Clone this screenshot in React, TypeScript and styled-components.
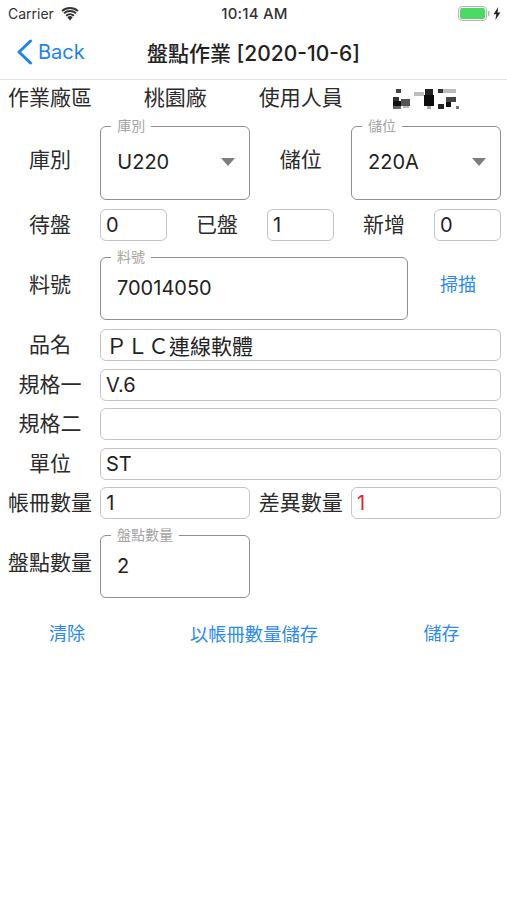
import React from 'react';
import styled, { createGlobalStyle } from 'styled-components';

const GlobalStyle = createGlobalStyle`
  html, body {
    margin: 0;
    padding: 0;
    background: #fff;
  }
  body {
    font-family: Inter, "Noto Sans CJK TC", sans-serif;
    color: #222;
  }
`;

const Page = styled.div`
  width: 507px;
  height: 900px;
  overflow: hidden;
  background: #fff;
`;

const StatusBar = styled.div`
  height: 27px;
  padding: 0 6px 0 8px;
  box-sizing: border-box;
  display: grid;
  grid-template-columns: 1fr auto 1fr;
  align-items: center;
  font-size: 14px;
  color: #333;
`;

const StatusLeft = styled.div`
  display: flex;
  align-items: center;
  gap: 7px;
`;

const StatusTime = styled.div`
  font-size: 15px;
  font-weight: 500;
  letter-spacing: 0.2px;
`;

const StatusRight = styled.div`
  display: flex;
  justify-content: flex-end;
  align-items: center;
  gap: 3px;
`;

const NavBar = styled.div`
  height: 53px;
  box-sizing: border-box;
  border-bottom: 1px solid #e4e4e4;
  display: grid;
  grid-template-columns: 1fr auto 1fr;
  align-items: center;
  padding: 0 16px 3px;
`;

const BackButton = styled.div`
  display: flex;
  align-items: center;
  gap: 5px;
  color: #1b84f2;
  font-size: 20px;
`;

const Title = styled.div`
  font-size: 21px;
  font-weight: 500;
  color: #222;
`;

const Form = styled.div`
  padding: 0 6px 0 8px;
  display: flex;
  flex-direction: column;
`;

const Row = styled.div<{ $height: number; $top: number; $spread?: boolean }>`
  display: flex;
  align-items: center;
  justify-content: ${(p) => (p.$spread ? 'space-between' : 'flex-start')};
  gap: 8px;
  height: ${(p) => p.$height}px;
  margin-top: ${(p) => p.$top}px;
`;

const Label = styled.div`
  flex: 0 0 84px;
  text-align: center;
  font-size: 21px;
  line-height: 28px;
  color: #2b2b2b;
  white-space: nowrap;
`;

const Plain = styled.div<{ $width: number }>`
  flex: 0 0 ${(p) => p.$width}px;
  display: flex;
  justify-content: center;
  align-items: center;
  font-size: 21px;
  line-height: 28px;
  color: #2b2b2b;
`;

const Input = styled.div<{ $width: number; $red?: boolean; $size?: number }>`
  flex: 0 0 ${(p) => p.$width}px;
  width: ${(p) => p.$width}px;
  height: 32px;
  box-sizing: border-box;
  border: 1px solid #c4c4c4;
  border-radius: 6px;
  padding: 0 5px;
  display: flex;
  align-items: center;
  font-size: ${(p) => p.$size ?? 20}px;
  color: ${(p) => (p.$red ? '#e0242c' : '#222')};
  white-space: nowrap;
`;

const Box = styled.fieldset<{ $width: number; $height: number }>`
  flex: 0 0 ${(p) => p.$width}px;
  width: ${(p) => p.$width}px;
  height: ${(p) => p.$height}px;
  box-sizing: border-box;
  margin: 0;
  padding: 0 16px;
  min-width: 0;
  border: 1.5px solid #8f8f8f;
  border-radius: 6px;
`;

const Legend = styled.legend`
  padding: 0 6px;
  margin-left: -6px;
  font-size: 14px;
  line-height: 14px;
  color: #a3a3a3;
`;

const BoxInner = styled.div<{ $top: number }>`
  display: flex;
  justify-content: space-between;
  align-items: center;
  font-size: 20px;
  line-height: 26px;
  color: #222;
  margin-top: ${(p) => p.$top}px;
`;

const Caret = styled.span`
  width: 0;
  height: 0;
  border-left: 7.5px solid transparent;
  border-right: 7.5px solid transparent;
  border-top: 8px solid #7d7d7d;
  margin-right: -2px;
`;

const LinkButton = styled.div`
  color: #2a8af0;
  font-size: 18px;
  line-height: 24px;
  white-space: nowrap;
`;

const WideLink = styled(LinkButton)`
  font-size: 18.3px;
`;

const ScanCell = styled.div`
  flex: 1;
  display: flex;
  justify-content: center;
  padding-right: 1px;
`;

const Actions = styled.div`
  display: grid;
  grid-template-columns: 118px 256px 1fr;
  margin: 24px 0 0 8px;
  padding-right: 6px;
  align-items: center;
  height: 24px;
`;

const ActionCell = styled.div`
  display: flex;
  justify-content: center;
`;

const Wifi = () => (
  <svg width="18" height="14" viewBox="0 0 18 14">
    <path d="M9 13.4 6.3 10.2a4.1 4.1 0 0 1 5.4 0Z" fill="#333" />
    <path d="M4.4 8a7 7 0 0 1 9.2 0l-1.2 1.4a5.1 5.1 0 0 0-6.8 0Z" fill="#333" />
    <path d="M.4 3.3a13 13 0 0 1 17.2 0l-1.3 1.5a11 11 0 0 0-14.6 0Z" fill="#333" />
    <path d="M2.4 5.6a10 10 0 0 1 13.2 0l-1.2 1.4a8 8 0 0 0-10.8 0Z" fill="#333" />
  </svg>
);

const Battery = () => (
  <svg width="32" height="15" viewBox="0 0 32 15">
    <rect x="0.5" y="0.5" width="28" height="14" rx="3.5" fill="none" stroke="#b5b5b5" />
    <rect x="2" y="2" width="25" height="11" rx="2" fill="#4cd964" />
    <rect x="30" y="5" width="1.5" height="5" rx="0.7" fill="#b5b5b5" />
  </svg>
);

const Bolt = () => (
  <svg width="8" height="13" viewBox="0 0 8 13">
    <path d="M5.2 0 0.6 7.2h2.7L2.4 13l5-7.6H4.6Z" fill="#222" />
  </svg>
);

const Chevron = () => (
  <svg width="17" height="26" viewBox="0 0 17 26">
    <path d="M14.5 2 3 13l11.5 11" fill="none" stroke="#1b84f2" strokeWidth="3" strokeLinecap="round" strokeLinejoin="round" />
  </svg>
);

// pixelated user name in the screenshot
const mosaic: [number, number, number, number, string][] = [
  [3, 2, 5, 4, '#444'],
  [0, 10, 6, 4, '#333'],
  [0, 14, 12, 5, '#111'],
  [8, 12, 9, 7, '#555'],
  [0, 19, 8, 3, '#666'],
  [10, 19, 6, 2, '#bbb'],
  [21, 5, 10, 4, '#bdbdbd'],
  [32, 2, 8, 6, '#222'],
  [31, 8, 10, 11, '#0c0c0c'],
  [34, 19, 4, 3, '#aaa'],
  [45, 2, 5, 4, '#333'],
  [50, 2, 13, 4, '#bcbcbc'],
  [53, 10, 10, 5, '#444'],
  [53, 15, 5, 5, '#111'],
  [45, 17, 6, 5, '#222'],
  [63, 19, 3, 3, '#777'],
];

const Mosaic = () => (
  <svg width="66" height="23" viewBox="0 0 66 23">
    {mosaic.map(([x, y, w, h, fill], i) => (
      <rect key={i} x={x} y={y} width={w} height={h} fill={fill} />
    ))}
  </svg>
);

const App: React.FC = () => {
  return (
    <Page>
      <GlobalStyle />
      <StatusBar>
        <StatusLeft>
          Carrier
          <Wifi />
        </StatusLeft>
        <StatusTime>10:14 AM</StatusTime>
        <StatusRight>
          <Battery />
          <Bolt />
        </StatusRight>
      </StatusBar>
      <NavBar>
        <BackButton>
          <Chevron />
          Back
        </BackButton>
        <Title>盤點作業 [2020-10-6]</Title>
      </NavBar>
      <Form>
        <Row $height={32} $top={2} $spread>
          <Label>作業廠區</Label>
          <Plain $width={150}>桃園廠</Plain>
          <Label>使用人員</Label>
          <Plain $width={150}>
            <Mosaic />
          </Plain>
        </Row>
        <Row $height={81} $top={5} $spread>
          <Label>庫別</Label>
          <Box $width={150} $height={81}>
            <Legend>庫別</Legend>
            <BoxInner $top={16}>
              U220
              <Caret />
            </BoxInner>
          </Box>
          <Label>儲位</Label>
          <Box $width={150} $height={81}>
            <Legend>儲位</Legend>
            <BoxInner $top={16}>
              220A
              <Caret />
            </BoxInner>
          </Box>
        </Row>
        <Row $height={32} $top={9}>
          <Label>待盤</Label>
          <Input $width={67}>0</Input>
          <Label>已盤</Label>
          <Input $width={67}>1</Input>
          <Label>新增</Label>
          <Input $width={67}>0</Input>
        </Row>
        <Row $height={70} $top={9}>
          <Label>料號</Label>
          <Box $width={308} $height={70}>
            <Legend>料號</Legend>
            <BoxInner $top={11}>70014050</BoxInner>
          </Box>
          <ScanCell>
            <LinkButton>掃描</LinkButton>
          </ScanCell>
        </Row>
        <Row $height={32} $top={9}>
          <Label>品名</Label>
          <Input $width={401} $size={21}>
            ＰＬＣ連線軟體
          </Input>
        </Row>
        <Row $height={32} $top={8}>
          <Label>規格一</Label>
          <Input $width={401}>V.6</Input>
        </Row>
        <Row $height={32} $top={7}>
          <Label>規格二</Label>
          <Input $width={401} />
        </Row>
        <Row $height={32} $top={8}>
          <Label>單位</Label>
          <Input $width={401}>ST</Input>
        </Row>
        <Row $height={32} $top={7} $spread>
          <Label>帳冊數量</Label>
          <Input $width={150}>1</Input>
          <Label>差異數量</Label>
          <Input $width={150} $red>
            1
          </Input>
        </Row>
        <Row $height={70} $top={9}>
          <Label>盤點數量</Label>
          <Box $width={150} $height={70}>
            <Legend>盤點數量</Legend>
            <BoxInner $top={11}>2</BoxInner>
          </Box>
        </Row>
      </Form>
      <Actions>
        <ActionCell>
          <LinkButton>清除</LinkButton>
        </ActionCell>
        <ActionCell>
          <WideLink>以帳冊數量儲存</WideLink>
        </ActionCell>
        <ActionCell>
          <LinkButton>儲存</LinkButton>
        </ActionCell>
      </Actions>
    </Page>
  );
};

export default App;
